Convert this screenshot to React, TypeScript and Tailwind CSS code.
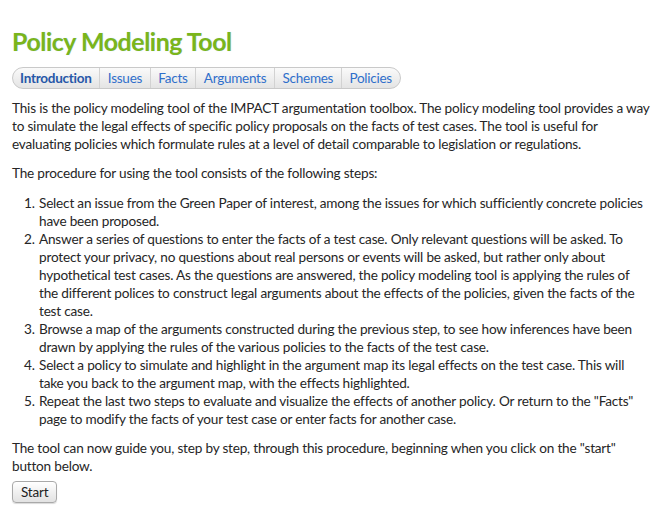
const tabs = ['Introduction', 'Issues', 'Facts', 'Arguments', 'Schemes', 'Policies']

// each step is kept as the lines it wraps to in the original page
const steps = [
  ['Select an issue from the Green Paper of interest, among the issues for which sufficiently concrete policies', 'have been proposed.'],
  [
    'Answer a series of questions to enter the facts of a test case. Only relevant questions will be asked. To',
    'protect your privacy, no questions about real persons or events will be asked, but rather only about',
    'hypothetical test cases. As the questions are answered, the policy modeling tool is applying the rules of',
    'the different polices to construct legal arguments about the effects of the policies, given the facts of the',
    'test case.',
  ],
  ['Browse a map of the arguments constructed during the previous step, to see how inferences have been', 'drawn by applying the rules of the various policies to the facts of the test case.'],
  ['Select a policy to simulate and highlight in the argument map its legal effects on the test case. This will', 'take you back to the argument map, with the effects highlighted.'],
  ['Repeat the last two steps to evaluate and visualize the effects of another policy. Or return to the "Facts"', 'page to modify the facts of your test case or enter facts for another case.'],
]

const intro = [
  'This is the policy modeling tool of the IMPACT argumentation toolbox. The policy modeling tool provides a way',
  'to simulate the legal effects of specific policy proposals on the facts of test cases. The tool is useful for',
  'evaluating policies which formulate rules at a level of detail comparable to legislation or regulations.',
]

function Lines({ lines }: { lines: string[] }) {
  return (
    <>
      {lines.map((l) => (
        <span key={l} className="block">{l}</span>
      ))}
    </>
  )
}

export default function App() {
  return (
    <div className="min-h-[517px] bg-white px-3 pt-[26px] font-['Lato',sans-serif] text-[13.6px] leading-[18px] tracking-[-0.2px] whitespace-nowrap text-[#262626]">
      <h1 className="text-[25px] font-bold leading-[30px] tracking-[-0.5px] text-[#7bb51b] [text-shadow:0_0_1px_rgba(120,180,255,0.5)]">Policy Modeling Tool</h1>
      <div className="mt-[11px] inline-flex h-[22px] items-stretch overflow-hidden rounded-full border border-[#c9c9c9] bg-gradient-to-b from-[#fafafa] to-[#e4e4e4] text-[13.5px] tracking-[-0.25px]">
        {tabs.map((tab, i) => (
          <span
            key={tab}
            className={`flex items-center px-[7.6px] ${i > 0 ? 'border-l border-[#d2d2d2] text-[#2f6fcb]' : 'pl-[7px] font-bold text-[#2657a8]'}`}
          >
            {tab}
          </span>
        ))}
      </div>
      <p className="mt-[10px]">
        <Lines lines={intro} />
      </p>
      <p className="mt-[11px]">The procedure for using the tool consists of the following steps:</p>
      <ol className="mt-[12px] list-decimal pl-[26px]">
        {steps.map((s) => (
          <li key={s[0]} className="pl-[1px]">
            <Lines lines={s} />
          </li>
        ))}
      </ol>
      <p className="mt-[11px]">
        <Lines lines={['The tool can now guide you, step by step, through this procedure, beginning when you click on the "start"', 'button below.']} />
      </p>
      <button className="mt-[6px] h-[22px] rounded-[4px] border border-[#a9a9a9] bg-gradient-to-b from-white to-[#e2e2e2] px-[8px] text-[13.5px] leading-[20px] text-[#222] shadow-[0_1px_1px_rgba(0,0,0,0.15)]">
        Start
      </button>
    </div>
  )
}
